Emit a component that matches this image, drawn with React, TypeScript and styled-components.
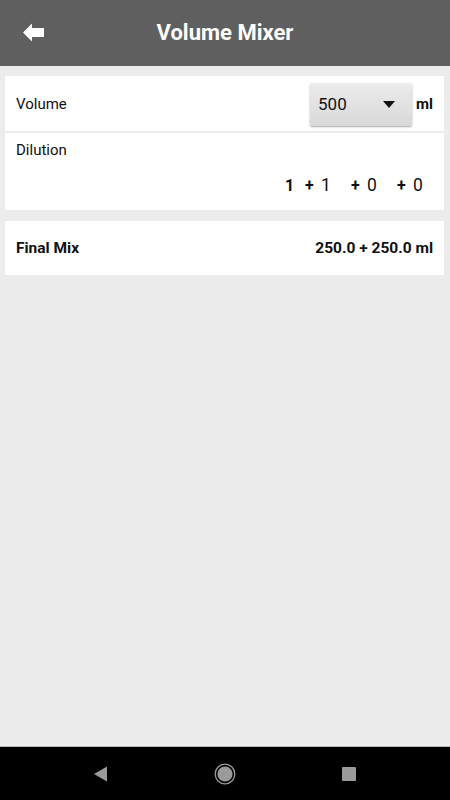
import React from 'react';
import styled, { createGlobalStyle } from 'styled-components';

const GlobalStyle = createGlobalStyle`
  html, body {
    margin: 0;
    padding: 0;
    background: #ececec;
  }
  body {
    font-family: Roboto, "Noto Sans", sans-serif;
    color: #111;
  }
`;

const Screen = styled.div`
  display: flex;
  flex-direction: column;
  width: 450px;
  height: 800px;
  overflow: hidden;
`;

const Header = styled.div`
  display: flex;
  align-items: center;
  height: 66px;
  background: #5f5f5f;
  flex-shrink: 0;
`;

const BackButton = styled.div`
  width: 66px;
  height: 66px;
  display: flex;
  align-items: center;
  padding-left: 23px;
  box-sizing: border-box;
  margin-top: -2px;
`;

const Title = styled.div`
  flex: 1;
  text-align: center;
  margin-right: 66px;
  margin-top: -1px;
  font-size: 22px;
  font-weight: 700;
  color: #fff;
`;

const Content = styled.div`
  flex: 1;
  display: flex;
  flex-direction: column;
  padding: 10px 6px 0 5px;
  background: #ececec;
`;

const Card = styled.div<{ $h: number; $gap?: number }>`
  background: #fff;
  height: ${(p) => p.$h}px;
  margin-bottom: ${(p) => p.$gap ?? 0}px;
  box-sizing: border-box;
`;

const Row = styled.div`
  display: flex;
  align-items: center;
  height: 100%;
  padding: 0 11px;
`;

const Label = styled.div<{ $bold?: boolean }>`
  flex: 1;
  font-size: ${(p) => (p.$bold ? 15.5 : 15)}px;
  font-weight: ${(p) => (p.$bold ? 700 : 400)};
`;

const Select = styled.div`
  display: flex;
  align-items: center;
  width: 102px;
  height: 43px;
  box-sizing: border-box;
  padding: 0 17px 0 8px;
  background: linear-gradient(#ececec, #d8d8d8);
  border-radius: 2px;
  box-shadow: 0 1px 2px rgba(0, 0, 0, 0.35);
  margin-top: 1px;
`;

const SelectValue = styled.div`
  flex: 1;
  font-size: 17px;
`;

const Unit = styled.div`
  font-size: 15px;
  font-weight: 700;
  margin-left: 4px;
`;

const DilutionBody = styled.div`
  padding: 8px 11px 0;
  font-size: 15px;
`;

const Ratio = styled.div`
  display: flex;
  justify-content: flex-end;
  align-items: center;
  margin-top: 16px;
  margin-right: -10px;
  font-size: 17.5px;
`;

const Lead = styled.div`
  width: 20px;
  font-weight: 700;
  font-size: 16px;
`;

const Part = styled.div`
  width: 46px;
  display: flex;
  align-items: center;
`;

const Plus = styled.span`
  width: 16px;
  font-weight: 700;
  font-size: 16px;
`;

const Value = styled.div`
  font-size: 15.5px;
  font-weight: 700;
`;

const NavBar = styled.div`
  height: 53px;
  flex-shrink: 0;
  background: #000;
  border-top: 1px solid #b8b8b8;
  display: flex;
  align-items: center;
  justify-content: center;
`;

const NavSlot = styled.div`
  width: 124px;
  display: flex;
  justify-content: center;
  align-items: center;
`;

const Caret = () => (
  <svg width="12" height="7" viewBox="0 0 12 7">
    <path d="M0 0 H12 L6 7 Z" fill="#111" />
  </svg>
);

const BackArrow = () => (
  <svg width="22" height="19" viewBox="0 0 22 19">
    <path d="M0 9.5 L9 0.5 V5 H21 V14 H9 V18.5 Z" fill="#fff" />
  </svg>
);

export default function App() {
  return (
    <Screen>
      <GlobalStyle />
      <Header>
        <BackButton>
          <BackArrow />
        </BackButton>
        <Title>Volume Mixer</Title>
      </Header>
      <Content>
        <Card $h={55} $gap={2}>
          <Row>
            <Label>Volume</Label>
            <Select>
              <SelectValue>500</SelectValue>
              <Caret />
            </Select>
            <Unit>ml</Unit>
          </Row>
        </Card>
        <Card $h={77} $gap={11}>
          <DilutionBody>
            Dilution
            <Ratio>
              <Lead>1</Lead>
              <Part>
                <Plus>+</Plus>1
              </Part>
              <Part>
                <Plus>+</Plus>0
              </Part>
              <Part>
                <Plus>+</Plus>0
              </Part>
            </Ratio>
          </DilutionBody>
        </Card>
        <Card $h={54}>
          <Row>
            <Label $bold>Final Mix</Label>
            <Value>250.0 + 250.0 ml</Value>
          </Row>
        </Card>
      </Content>
      <NavBar>
        <NavSlot>
          <svg width="14" height="16" viewBox="0 0 14 16">
            <path d="M0 8 L13 0.5 V15.5 Z" fill="#9a9a9a" />
          </svg>
        </NavSlot>
        <NavSlot>
          <svg width="22" height="22" viewBox="0 0 22 22">
            <circle cx="11" cy="11" r="9.8" fill="none" stroke="#9a9a9a" strokeWidth="1.3" />
            <circle cx="11" cy="11" r="7.6" fill="#9a9a9a" />
          </svg>
        </NavSlot>
        <NavSlot>
          <svg width="14" height="14" viewBox="0 0 14 14">
            <rect x="0" y="0" width="14" height="14" rx="1" fill="#9a9a9a" />
          </svg>
        </NavSlot>
      </NavBar>
    </Screen>
  );
}
